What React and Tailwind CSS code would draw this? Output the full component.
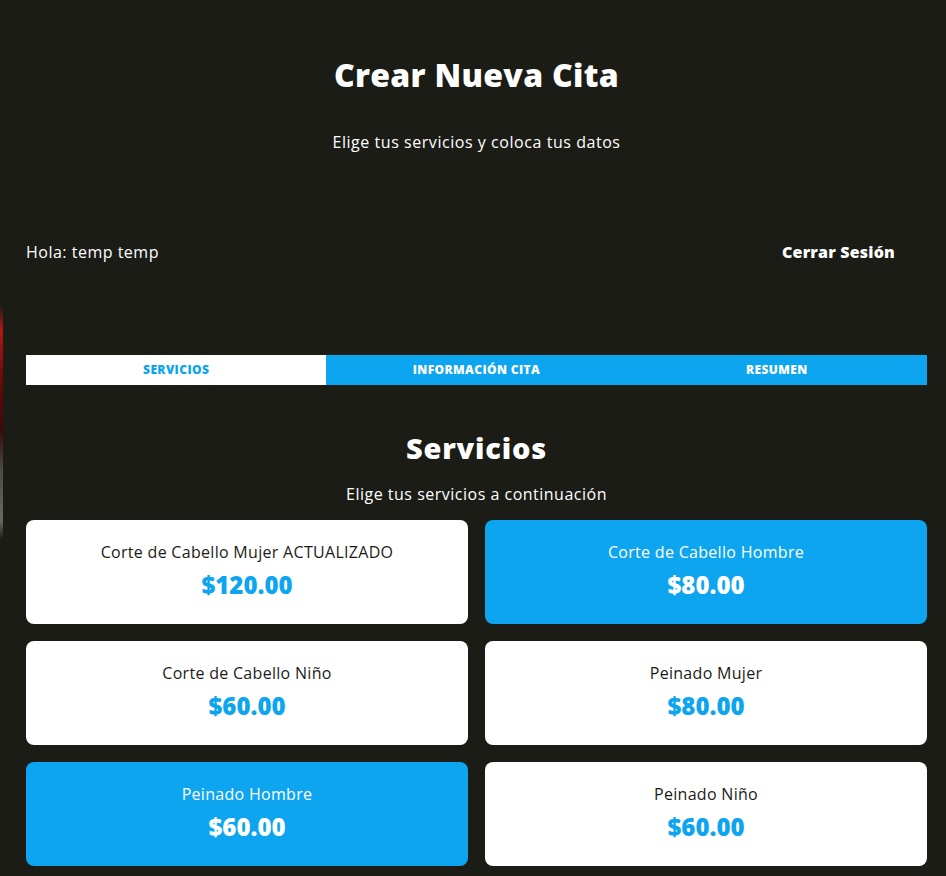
import { useState } from 'react';

const servicios = [
  { id: 1, nombre: 'Corte de Cabello Mujer ACTUALIZADO', precio: '120.00' },
  { id: 2, nombre: 'Corte de Cabello Hombre', precio: '80.00' },
  { id: 3, nombre: 'Corte de Cabello Niño', precio: '60.00' },
  { id: 4, nombre: 'Peinado Mujer', precio: '80.00' },
  { id: 5, nombre: 'Peinado Hombre', precio: '60.00' },
  { id: 6, nombre: 'Peinado Niño', precio: '60.00' },
];

const App = () => {
  const [seleccionados, setSeleccionados] = useState([2, 5]);
  const [paso, setPaso] = useState(1);

  const toggleServicio = (id) => {
    setSeleccionados(prev => prev.includes(id) ? prev.filter(s => s !== id) : [...prev, id]);
  };

  const tabs = ['Servicios', 'Información Cita', 'Resumen'];

  return (
    <div className="flex min-h-screen bg-[#1c1c17] font-['Open_Sans',sans-serif]">
      {/* franja imagen */}
      <div className="w-[3px] shrink-0 bg-[linear-gradient(to_bottom,#1c1c17_0px,#1c1c17_305px,#b01818_330px,#6a0808_380px,#3a0a08_430px,#4a4a44_470px,#6a6a62_520px,#1c1c17_540px)]" />

      <main className="flex-1 pl-[23px] pr-[19px] pt-[52px] pb-10">
        {/* Header */}
        <h1 className="text-center text-[32px] font-extrabold text-white leading-[46px] tracking-[0.3px]">
          Crear Nueva Cita
        </h1>
        <p className="text-center text-white text-[16px] mt-[32px] leading-6 tracking-[0.55px]">
          Elige tus servicios y coloca tus datos
        </p>

        {/* Barra usuario */}
        <div className="flex justify-between items-center mt-[86px] pr-[32px]">
          <p className="text-white text-[16px] leading-6 tracking-[0.5px]">Hola: temp temp</p>
          <button className="text-white text-[16px] font-extrabold tracking-[0.2px]">Cerrar Sesión</button>
        </div>

        {/* Tabs */}
        <nav className="grid grid-cols-3 mt-[91px]">
          {tabs.map((tab, i) => (
            <button
              key={tab}
              onClick={() => setPaso(i + 1)}
              className={`h-[30px] text-[12px] font-extrabold uppercase tracking-[0.4px] ${
                paso === i + 1 ? 'bg-white text-[#0da5f0]' : 'bg-[#0da5f0] text-white'
              }`}
            >
              {tab}
            </button>
          ))}
        </nav>

        {/* Servicios */}
        <h2 className="text-center text-white text-[29px] font-extrabold mt-[44px] leading-[38px] tracking-[0.8px]">Servicios</h2>
        <p className="text-center text-white text-[16px] mt-[15px] leading-6 tracking-[0.5px]">Elige tus servicios a continuación</p>

        <div className="grid grid-cols-2 gap-[17px] mt-[14px]">
          {servicios.map(servicio => {
            const activo = seleccionados.includes(servicio.id);
            return (
              <div
                key={servicio.id}
                onClick={() => toggleServicio(servicio.id)}
                className={`h-[104px] rounded-lg flex flex-col items-center pt-[20px] cursor-pointer ${
                  activo ? 'bg-[#0da5f0]' : 'bg-white'
                }`}
              >
                <p className={`text-[16px] leading-6 tracking-[0.3px] ${activo ? 'text-white' : 'text-[#1c1c17]'}`}>{servicio.nombre}</p>
                <p className={`text-[24px] font-extrabold leading-8 mt-[5px] ${activo ? 'text-white' : 'text-[#0da5f0]'}`}>
                  ${servicio.precio}
                </p>
              </div>
            );
          })}
        </div>
      </main>
    </div>
  );
};

export default App;
